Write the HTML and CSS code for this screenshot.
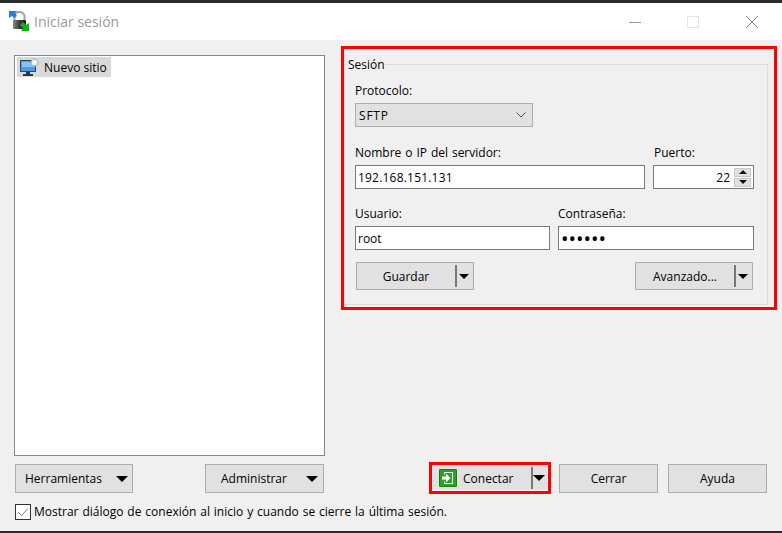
FILE: index.html
```html
<!DOCTYPE html>
<html lang="es">
<head>
    <meta charset="UTF-8">
    <meta name="viewport" content="width=device-width, initial-scale=1.0">
    <title>Iniciar sesión</title>
    <link rel="stylesheet" href="styles.css">
</head>
<body>
    <div class="window">
        <div class="strip"></div>

        <!-- barra de titulo -->
        <div class="titlebar">
            <svg class="app-icon" width="21" height="21" viewBox="0 0 21 21">
                <defs>
                    <linearGradient id="lockBody" x1="0" y1="0" x2="1" y2="0">
                        <stop offset="0" stop-color="#8a8a8a"/>
                        <stop offset="0.5" stop-color="#3c3c3c"/>
                        <stop offset="1" stop-color="#1c1c1c"/>
                    </linearGradient>
                </defs>
                <path d="M5.500 9V5a5 4 0 0 1 10 0v4" fill="none" stroke="#a0a0a0" stroke-width="2"/>
                <rect x="4" y="9" width="13" height="9" rx="1" fill="url(#lockBody)"/>
                <path d="M0 0h8L6 2l2 3-3 2-2-2-3 2z" fill="#1f7fe0"/>
                <path d="M20 20h-8l2-3-3-3 3-3 3 3 3-2z" fill="#12b312"/>
            </svg>
            <span class="title">Iniciar sesión</span>
            <div class="win-buttons">
                <div class="win-btn"><svg width="14" height="14" viewBox="0 0 14 14"><path d="M1 7.500h12" stroke="#999"/></svg></div>
                <div class="win-btn"><svg width="14" height="14" viewBox="0 0 14 14"><rect x="1.500" y="1.500" width="11" height="11" fill="none" stroke="#e6e6e6"/></svg></div>
                <div class="win-btn"><svg width="14" height="14" viewBox="0 0 14 14"><path d="M1 1l12 12M13 1L1 13" stroke="#8c8c8c"/></svg></div>
            </div>
        </div>

        <div class="main">
            <!-- lista de sitios -->
            <div class="tree">
                <div class="tree-item">
                    <svg width="19" height="19" viewBox="0 0 19 19">
                        <rect x="0.500" y="2.500" width="15" height="11" fill="#4a9be8" stroke="#34485c"/>
                        <rect x="2" y="4" width="12" height="5" fill="#86c4f5"/>
                        <rect x="6" y="14" width="4" height="2" fill="#2b3a48"/>
                        <rect x="3" y="16" width="10" height="2" fill="#2b3a48"/>
                        <path d="M14 0l1 2 2-1 0 2 2 1-2 1 1 2-2 0-1 2-1-2-2 1 0-2-2-1 2-1-1-2 2 0z" fill="#f4f7fa" stroke="#8aa0b4" stroke-width="0.600"/>
                    </svg>
                    <span>Nuevo sitio</span>
                </div>
            </div>

            <!-- datos de sesion -->
            <div class="highlight">
                <fieldset class="session">
                    <legend>Sesión</legend>

                    <div class="row row-protocol">
                        <div class="field">
                            <label for="protocol">Protocolo:</label>
                            <div class="select" id="protocol">
                                <span class="select-value">SFTP</span>
                                <svg width="10" height="6" viewBox="0 0 10 6"><path d="M0.500 0.500L5 5l4.500-4.500" fill="none" stroke="#555"/></svg>
                            </div>
                        </div>
                    </div>

                    <div class="row">
                        <div class="field field-host">
                            <label for="host">Nombre o IP del servidor:</label>
                            <input class="host-input" type="text" id="host" value="192.168.151.131">
                        </div>
                        <div class="field field-port">
                            <label for="port">Puerto:</label>
                            <div class="port-box">
                                <input type="text" id="port" value="22">
                                <div class="spin">
                                    <div class="spin-btn"><i class="arrow-up"></i></div>
                                    <div class="spin-btn"><i class="arrow-down"></i></div>
                                </div>
                            </div>
                        </div>
                    </div>

                    <div class="row row-user">
                        <div class="field field-user">
                            <label for="user">Usuario:</label>
                            <input type="text" id="user" value="root">
                        </div>
                        <div class="field field-pass">
                            <label for="pass">Contraseña:</label>
                            <input class="pass-input" type="password" id="pass" value="123456">
                        </div>
                    </div>

                    <div class="session-buttons">
                        <button class="split-btn" type="button"><span class="btn-text">Guardar</span><i class="divider"></i><i class="caret"></i></button>
                        <button class="split-btn" type="button"><span class="btn-text">Avanzado...</span><i class="divider"></i><i class="caret"></i></button>
                    </div>
                </fieldset>
            </div>
        </div>

        <!-- botones de abajo -->
        <div class="actions">
            <button class="menu-btn tools" type="button"><span>Herramientas</span><i class="caret"></i></button>
            <button class="menu-btn manage" type="button"><span>Administrar</span><i class="caret"></i></button>
            <div class="connect-wrap">
                <button class="connect" type="button">
                    <svg width="18" height="18" viewBox="0 0 18 18">
                        <rect width="18" height="18" rx="1.500" fill="#2f9e2a"/>
                        <rect x="0.500" y="0.500" width="17" height="17" rx="1" fill="none" stroke="#1c7a12"/>
                        <path d="M5 3h9v12H5v-2.500h1V14h7V4H6v1.500H5z" fill="#fff"/>
                        <path d="M3 7.500h4V4.500L11.500 9 7 13.500v-3H3z" fill="#fff"/>
                    </svg>
                    <span class="connect-text">Conectar</span>
                    <i class="divider"></i><i class="caret"></i>
                </button>
            </div>
            <button class="plain-btn close" type="button">Cerrar</button>
            <button class="plain-btn" type="button">Ayuda</button>
        </div>

        <div class="check-row">
            <svg class="check" width="16" height="16" viewBox="0 0 16 16">
                <rect x="0.500" y="0.500" width="15" height="15" fill="#fff" stroke="#333"/>
                <path d="M3 8l3.500 3.500L13 4.500" fill="none" stroke="#777"/>
            </svg>
            <span>Mostrar diálogo de conexión al inicio y cuando se cierre la última sesión.</span>
        </div>

        <div class="strip strip-bottom"></div>
    </div>
</body>
</html>
```

FILE: styles.css
```css
html, body {
    margin: 0;
    padding: 0;
}
body {
    font-family: "Open Sans", sans-serif;
    font-size: 12px;
    color: #000;
    background-color: #f0f0f0;
}
.window {
    display: flex;
    flex-direction: column;
    height: 533px;
    overflow: hidden;
}
.strip {
    height: 3px;
    background-color: #2b2b2b;
}
.strip-bottom {
    height: 2px;
    margin-top: auto;
}
.titlebar {
    display: flex;
    align-items: center;
    height: 37px;
    padding-left: 9px;
    background: #fff;
}
.title {
    margin-left: 4px;
    font-size: 14px;
    color: #9a9a9a;
}
.win-buttons {
    display: flex;
    margin-left: auto;
    padding-right: 1px;
}
.win-btn {
    display: flex;
    align-items: center;
    justify-content: center;
    width: 58px;
    height: 37px;
}
.win-btn:last-child {
    width: 59px;
}
.main {
    display: flex;
    align-items: flex-start;
    height: 410px;
    padding-top: 6px;
    padding-left: 14px;
    margin-bottom: 8px;
}
.tree {
    box-sizing: border-box;
    width: 311px;
    height: 401px;
    margin-top: 9px;
    padding: 1px 2px;
    background: #fff;
    border: 1px solid #828790;
}
.tree-item {
    display: inline-flex;
    align-items: center;
    gap: 5px;
    height: 20px;
    padding: 0 4px 0 3px;
    background-color: #d9d9d9;
}
.highlight {
    box-sizing: border-box;
    display: flex;
    width: 436px;
    height: 264px;
    margin-left: 16px;
    border: 3px solid #ff0000;
    padding: 0 6px 2px 0;
}
.session {
    flex: 1;
    min-width: 0;
    margin: 6px 0 0 0;
    padding: 9px 13px 0 11px;
    border: 1px solid #dcdcdc;
    border-left: none;
}
.session legend {
    margin-left: -7px;
    padding: 2px 0 0;
    line-height: 16px;
}
.row {
    display: flex;
    justify-content: space-between;
    margin-bottom: 16px;
}
.row-protocol {
    margin-bottom: 17px;
}
.row-user {
    margin-bottom: 12px;
}
.field {
    display: flex;
    flex-direction: column;
    gap: 3px;
}
label {
    display: block;
    line-height: 18px;
    word-spacing: 0.8px;
}
input {
    box-sizing: border-box;
    width: 100%;
    height: 24px;
    padding: 0 2px;
    font-family: inherit;
    font-size: 12px;
    color: #000;
    border: 1px solid #7a7a7a;
    border-radius: 0;
    outline: none;
}
.host-input {
    letter-spacing: 0.2px;
}
.pass-input {
    font-size: 20px;
}
.select {
    box-sizing: border-box;
    display: flex;
    align-items: center;
    justify-content: space-between;
    width: 178px;
    height: 24px;
    padding: 0 6px 0 3px;
    background-color: #e1e1e1;
    border: 1px solid #adadad;
}
.select-value {
    letter-spacing: 0.8px;
}
.field-host {
    width: 290px;
}
.field-port {
    width: 101px;
}
.field-port label {
    margin-left: 1px;
}
.port-box {
    display: flex;
    align-items: center;
    box-sizing: border-box;
    height: 24px;
    padding-right: 2px;
    background: #fff;
    border: 1px solid #7a7a7a;
}
.port-box input {
    flex: 1;
    min-width: 0;
    height: 22px;
    padding-right: 4px;
    text-align: right;
    border: none;
}
.spin {
    display: flex;
    flex-direction: column;
    gap: 1px;
    width: 17px;
}
.spin-btn {
    display: flex;
    align-items: center;
    justify-content: center;
    height: 9px;
    background-color: #e1e1e1;
    border: 1px solid #c8c8c8;
    box-sizing: border-box;
}
.arrow-up {
    width: 0;
    height: 0;
    border-left: 4px solid transparent;
    border-right: 4px solid transparent;
    border-bottom: 4px solid #111;
}
.arrow-down {
    width: 0;
    height: 0;
    border-left: 4px solid transparent;
    border-right: 4px solid transparent;
    border-top: 4px solid #111;
}
.field-user {
    width: 195px;
}
.field-pass {
    width: 196px;
}
.session-buttons {
    display: flex;
    justify-content: space-between;
    padding: 0 1px;
}
button {
    box-sizing: border-box;
    font-family: inherit;
    font-size: 12px;
    color: #000;
    background-color: #e1e1e1;
    border: 1px solid #adadad;
    border-radius: 0;
    padding: 0;
}
.divider {
    width: 2px;
    height: 22px;
    background-color: #777;
}
.caret {
    width: 0;
    height: 0;
    border-left: 6px solid transparent;
    border-right: 6px solid transparent;
    border-top: 6px solid #000;
}
.split-btn {
    display: flex;
    align-items: center;
    width: 118px;
    height: 28px;
    padding-right: 4px;
}
.split-btn .btn-text {
    flex: 1;
    text-align: center;
}
.split-btn .divider {
    margin-right: 2px;
}
.split-btn .caret {
    border-left-width: 5px;
    border-right-width: 5px;
    border-top-width: 5px;
}
.actions {
    display: flex;
    align-items: center;
    height: 29px;
    padding-left: 15px;
}
.menu-btn {
    display: flex;
    align-items: center;
    justify-content: space-between;
    height: 29px;
    padding: 0 4px 0 9px;
}
.tools {
    width: 118px;
}
.manage {
    width: 119px;
    margin-left: 72px;
    padding: 0 5px 0 15px;
}
.connect-wrap {
    box-sizing: border-box;
    display: flex;
    width: 122px;
    height: 32px;
    margin: -2px 0 -1px 105px;
    padding: 1px;
    border: 3px solid #ff0000;
}
.connect {
    flex: 1;
    display: flex;
    align-items: center;
    padding: 0 2px 0 6px;
    border: none;
}
.connect-text {
    flex: 1;
    margin-left: 6px;
    text-align: left;
}
.plain-btn {
    width: 99px;
    height: 29px;
}
.close {
    margin-left: 8px;
    margin-right: 10px;
}
.check-row {
    display: flex;
    align-items: center;
    gap: 3px;
    margin-top: 10px;
    padding-left: 15px;
    word-spacing: 0.8px;
}
```
